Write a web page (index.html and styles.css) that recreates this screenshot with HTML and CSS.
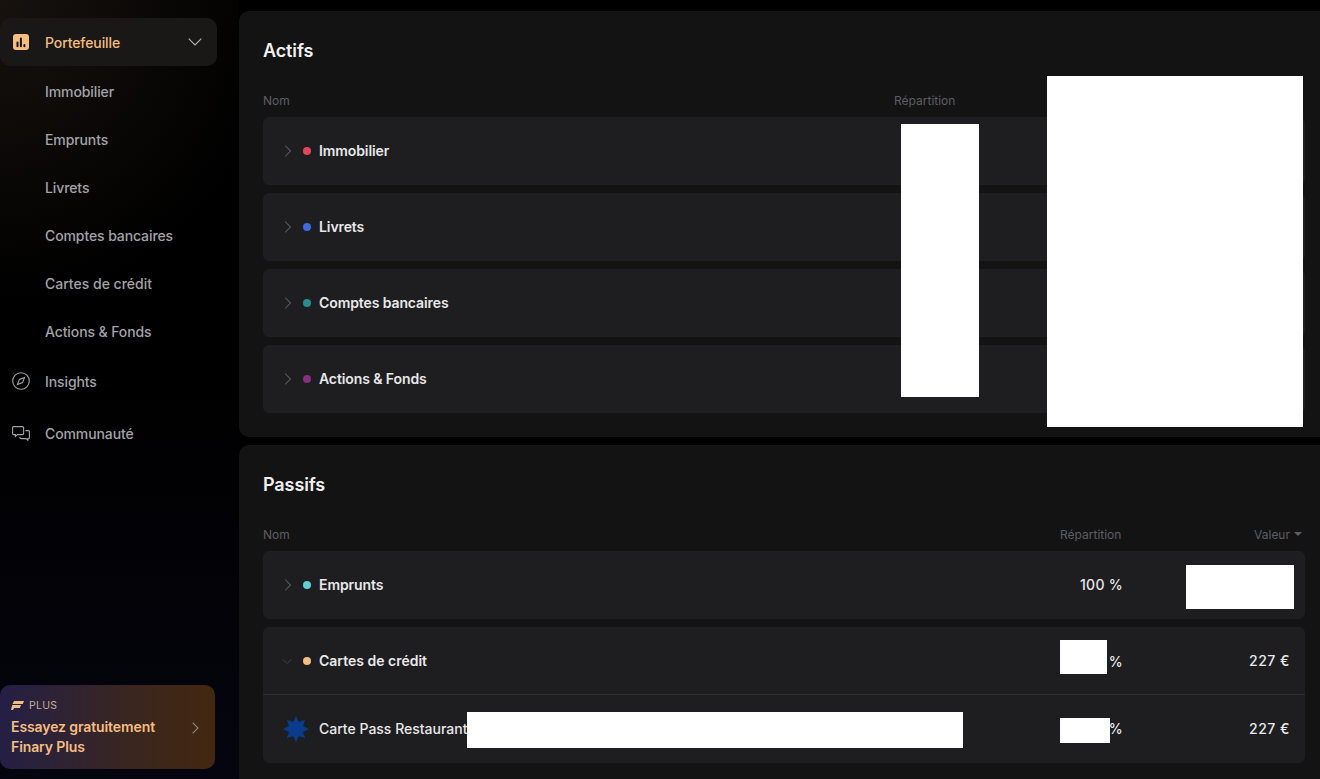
FILE: index.html
```html
<!DOCTYPE html>
<html lang="fr">
<head>
	<meta charset="utf-8" />
	<title>Finary - Portefeuille</title>
	<link rel="stylesheet" href="styles.css">
</head>
<body>

<aside class="sidebar">
	<nav class="nav">
		<a class="nav-item active">
			<svg class="nav-icon" width="18" height="18" viewBox="0 0 18 18"><rect x="1" y="1" width="16" height="16" rx="3" fill="#f5bd80"/><path d="M5.5 13.2V9.5M8.9 13.2V5.6M12.4 13.2V12" stroke="#1a1512" stroke-width="2" stroke-linecap="round" fill="none"/></svg>
			<span>Portefeuille</span>
			<svg class="nav-chevron" width="14" height="8" viewBox="0 0 14 8"><path d="M.7.7 7 7 13.3.7" stroke="#b4b4b8" stroke-width="1.1" fill="none"/></svg>
		</a>
		<a class="nav-sub">Immobilier</a>
		<a class="nav-sub">Emprunts</a>
		<a class="nav-sub">Livrets</a>
		<a class="nav-sub">Comptes bancaires</a>
		<a class="nav-sub wide">Cartes de crédit</a>
		<a class="nav-sub">Actions &amp; Fonds</a>
		<a class="nav-item insights">
			<svg class="nav-icon" width="18" height="18" viewBox="0 0 18 18" fill="none" stroke="#a3a3a8" stroke-width="1.1"><circle cx="9" cy="9" r="8.3"/><path d="M12.6 5.4 10.6 10.6 5.4 12.6 7.4 7.4Z"/></svg>
			<span>Insights</span>
		</a>
		<a class="nav-item community">
			<svg class="nav-icon" width="18" height="15" viewBox="0 0 18 15" fill="none" stroke="#a3a3a8" stroke-width="1.1"><path d="M1.5.6H10.6Q11.6.6 11.6 1.6V7.6Q11.6 8.6 10.6 8.6H5.4L3.4 10.4V8.6H1.5Q.6 8.6.6 7.6V1.6Q.6.6 1.5.6Z"/><path d="M13.4 4.6H16.4Q17.4 4.6 17.4 5.6V11.6Q17.4 12.6 16.4 12.6H15.8V14.2L14 12.6H9.4Q8 12.6 7.6 11"/></svg>
			<span>Communauté</span>
		</a>
	</nav>

	<a class="promo">
		<div class="promo-text">
			<div class="promo-badge">
				<svg width="13" height="9" viewBox="0 0 13 9"><path d="M3 0H13L11.8 3H1.5ZM1.2 4H10L8.8 7H3.2L2 9H0Z" fill="#f5bd80"/></svg>
				PLUS
			</div>
			<div class="promo-title">Essayez gratuitement<br>Finary Plus</div>
		</div>
		<svg width="7" height="12" viewBox="0 0 7 12"><path d="M.7.7 6 6 .7 11.3" stroke="#8d8682" stroke-width="1.1" fill="none"/></svg>
	</a>
</aside>

<main class="main">
	<section class="panel actifs">
		<h2>Actifs</h2>
		<div class="table-head">
			<span>Nom</span>
			<span>Répartition</span>
			<span class="head-value">Valeur <i class="caret"></i></span>
		</div>
		<div class="group">
			<div class="row">
				<svg class="chevron" width="7" height="12" viewBox="0 0 7 12"><path d="M.7.7 6 6 .7 11.3"/></svg>
				<i class="dot red"></i>
				<span class="name">Immobilier</span>
			</div>
		</div>
		<div class="group">
			<div class="row">
				<svg class="chevron" width="7" height="12" viewBox="0 0 7 12"><path d="M.7.7 6 6 .7 11.3"/></svg>
				<i class="dot blue"></i>
				<span class="name">Livrets</span>
			</div>
		</div>
		<div class="group">
			<div class="row">
				<svg class="chevron" width="7" height="12" viewBox="0 0 7 12"><path d="M.7.7 6 6 .7 11.3"/></svg>
				<i class="dot teal"></i>
				<span class="name">Comptes bancaires</span>
			</div>
		</div>
		<div class="group">
			<div class="row">
				<svg class="chevron" width="7" height="12" viewBox="0 0 7 12"><path d="M.7.7 6 6 .7 11.3"/></svg>
				<i class="dot purple"></i>
				<span class="name">Actions &amp; Fonds</span>
			</div>
		</div>
	</section>

	<section class="panel passifs">
		<h2>Passifs</h2>
		<div class="table-head">
			<span>Nom</span>
			<span>Répartition</span>
			<span class="head-value">Valeur <i class="caret"></i></span>
		</div>
		<div class="group">
			<div class="row">
				<svg class="chevron" width="7" height="12" viewBox="0 0 7 12"><path d="M.7.7 6 6 .7 11.3"/></svg>
				<i class="dot cyan"></i>
				<span class="name">Emprunts</span>
				<span class="pct">100 %</span>
				<span class="val"></span>
			</div>
		</div>
		<div class="group">
			<div class="row">
				<svg class="chevron open" width="12" height="7" viewBox="0 0 12 7"><path d="M.7.7 6 6 11.3.7"/></svg>
				<i class="dot orange"></i>
				<span class="name wide">Cartes de crédit</span>
				<span class="pct low">%</span>
				<span class="val">227 €</span>
			</div>
			<div class="row child">
				<svg class="star" width="26" height="26" viewBox="0 0 26 26"><polygon fill="#0b3c8c" points="13,0 15.9,6.1 22.2,3.8 19.9,10.1 26,13 19.9,15.9 22.2,22.2 15.9,19.9 13,26 10.1,19.9 3.8,22.2 6.1,15.9 0,13 6.1,10.1 3.8,3.8 10.1,6.1"/></svg>
				<span class="name wide">Carte Pass Restaurant</span>
				<span class="pct">%</span>
				<span class="val">227 €</span>
			</div>
		</div>
	</section>
</main>

<!-- masked areas of the capture -->
<div class="mask mask-a1"></div>
<div class="mask mask-a2"></div>
<div class="mask mask-p1"></div>
<div class="mask mask-p2"></div>
<div class="mask mask-p3"></div>
<div class="mask mask-p4"></div>

</body>
</html>
```

FILE: styles.css
```css
* {
	box-sizing: border-box;
}

html, body {
	height: 100%;
}

body {
	margin: 0;
	display: flex;
	overflow: hidden;
	position: relative;
	background: #000;
	font-family: Inter, "Liberation Sans", sans-serif;
	font-size: 14px;
	letter-spacing: -.1px;
	color: #e8e8ea;
}

.wide {
	letter-spacing: 0;
}

/* sidebar */

.sidebar {
	width: 239px;
	flex: none;
	display: flex;
	flex-direction: column;
	justify-content: space-between;
	padding: 18px 0 10px;
	background:
		radial-gradient(ellipse 280px 300px at 0 0, #17120e 0%, rgba(23,18,14,0) 100%),
		linear-gradient(180deg, rgba(0,0,0,0) 50%, #05050f 100%),
		#000;
}

.nav {
	display: flex;
	flex-direction: column;
}

.nav-item {
	display: flex;
	align-items: center;
	height: 48px;
	width: 217px;
	padding-left: 12px;
	padding-top: 2px;
	color: #a3a3a8;
	font-weight: 500;
}

.nav-item.active {
	background: #191817;
	border-radius: 10px;
	color: #f5bd80;
	padding: 0 15px 0 12px;
}

.nav-item.insights {
	margin-top: 2px;
}

.nav-item.community {
	margin-top: 4px;
}

.nav-icon {
	flex: none;
	margin-right: 15px;
}

.nav-chevron {
	margin-left: auto;
}

.nav-sub {
	display: flex;
	align-items: center;
	height: 48px;
	padding: 2px 0 0 45px;
	color: #a3a3a8;
	font-weight: 500;
}

.promo {
	display: flex;
	align-items: center;
	justify-content: space-between;
	width: 215px;
	height: 84px;
	padding: 2px 16px 0 11px;
	border-radius: 10px;
	background: linear-gradient(90deg, #241f45 0%, #3a2620 60%, #43270f 100%);
}

.promo-badge {
	display: flex;
	align-items: center;
	gap: 5px;
	font-size: 10.5px;
	letter-spacing: .3px;
	color: #c4ae98;
	margin-bottom: 5px;
}

.promo-title {
	color: #f5bd80;
	font-weight: 600;
	line-height: 20px;
}

/* panels */

.main {
	flex: 1;
	min-width: 0;
	display: flex;
	flex-direction: column;
	gap: 8px;
	padding-top: 11px;
}

.panel {
	background: #131313;
	border-radius: 10px 0 0 10px;
	padding: 29px 15px 24px 24px;
}

.passifs {
	flex: 1;
}

.panel h2 {
	margin: 0 0 30px;
	font-size: 18px;
	line-height: 22px;
	font-weight: 600;
	color: #f0f0f2;
}

.table-head {
	display: grid;
	height: 16px;
	margin-bottom: 9px;
	padding-right: 3px;
	align-items: center;
	font-size: 12px;
	letter-spacing: 0;
	color: #5e5e64;
}

.actifs .table-head {
	grid-template-columns: 1fr 61px 347px;
}

.passifs .table-head {
	grid-template-columns: 1fr 62px 180px;
}

.head-value {
	display: flex;
	justify-content: flex-end;
	align-items: center;
	gap: 4px;
}

.caret {
	width: 0;
	height: 0;
	border-left: 4px solid transparent;
	border-right: 4px solid transparent;
	border-top: 4px solid #5e5e64;
}

.group {
	background: #1e1e20;
	border-radius: 6px;
	margin-bottom: 8px;
}

.group:last-child {
	margin-bottom: 0;
}

.row {
	display: flex;
	align-items: center;
	height: 68px;
	padding: 0 16px 0 19px;
}

.row.child {
	height: 69px;
	margin-top: -1px;
	border-top: 1px solid #2e2e30;
	padding-left: 20px;
}

.chevron {
	width: 12px;
	flex: none;
	fill: none;
	stroke: #55555a;
	stroke-width: 1.1;
}

.chevron.open {
	width: 10px;
	margin-right: 2px;
	stroke: #47474b;
}

.dot {
	width: 8px;
	height: 8px;
	flex: none;
	border-radius: 50%;
	margin: 0 8px 0 9px;
}

.red { background: #e0475b; }
.blue { background: #4169e1; }
.teal { background: #2a8c8c; }
.purple { background: #8a2f80; }
.cyan { background: #62cfd0; }
.orange { background: #f5bd80; }

.name {
	flex: 1;
	font-weight: 600;
	padding-bottom: 1px;
}

.child .name {
	font-weight: 500;
}

.star {
	flex: none;
	margin-right: 10px;
}

.pct, .val {
	font-weight: 500;
	text-align: right;
	padding-bottom: 1px;
}

.pct {
	width: 60px;
	margin-right: -1px;
	letter-spacing: .3px;
}

.pct.low {
	padding: 1px 0 0;
}

.val {
	width: 168px;
	margin-right: -1px;
	letter-spacing: .5px;
}

/* masked areas */

.mask {
	position: absolute;
	background: #fff;
}

.mask-a1 { left: 901px; top: 124px; width: 78px; height: 273px; }
.mask-a2 { left: 1047px; top: 76px; width: 256px; height: 351px; }
.mask-p1 { left: 1186px; top: 565px; width: 108px; height: 44px; }
.mask-p2 { left: 1060px; top: 640px; width: 47px; height: 34px; }
.mask-p3 { left: 467px; top: 712px; width: 496px; height: 36px; }
.mask-p4 { left: 1060px; top: 718px; width: 50px; height: 25px; }
```
